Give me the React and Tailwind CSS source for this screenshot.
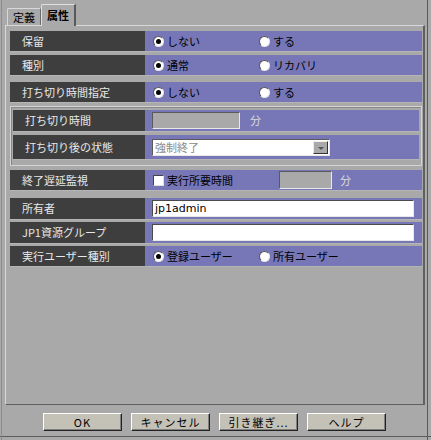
import React from "react";

const F = "font-['Noto_Sans_CJK_JP','Noto_Sans',sans-serif]";

function Radio({ checked }) {
  return (
    <span className="relative inline-flex w-[11px] h-[11px] rounded-full bg-white border border-t-[#555] border-l-[#555] border-b-[#e8e8e8] border-r-[#e8e8e8] items-center justify-center mr-[3px] shrink-0">
      {checked && <span className="w-[5px] h-[5px] rounded-full bg-black" />}
    </span>
  );
}

function Opt({ checked, label, w }) {
  return (
    <div className={`flex items-center ${w}`}>
      <Radio checked={checked} />
      <span className="text-black">{label}</span>
    </div>
  );
}

function Row({ label, h = "h-[21px]", mt, lw = "w-[135px]", children }) {
  return (
    <div className={`flex ${h} ${mt} border-b border-[#b4b4b4]`}>
      <div className={`${lw} bg-[#3e3e3e] text-[#e8e8e8] pl-[12px] flex items-center shrink-0`}>{label}</div>
      <div className="flex-1 bg-[#7777b8] flex items-center pl-[8px]">{children}</div>
    </div>
  );
}

function Btn({ children }) {
  return (
    <div className="w-[79px] h-[18px] bg-[#c4c1b6] border border-t-white border-l-white border-b-[#222] border-r-[#222] flex items-center justify-center text-black text-[11px] tracking-[1px] shadow-[inset_-1px_-1px_0_#808080]">
      {children}
    </div>
  );
}

export default function App() {
  return (
    <div className={`w-[431px] h-[440px] bg-[#a9a9a9] relative overflow-hidden ${F} text-[11px] leading-none`}>
      <div className="absolute right-[3px] top-0 bottom-0 w-[1px] bg-[#5a5a5a]" />
      <div className="absolute left-0 right-0 bottom-[3px] h-[1px] bg-[#5a5a5a]" />
      <div className="absolute left-[1px] top-0 bottom-0 w-[1px] bg-[#8c8c8c]" />
      <div className="pl-[5px] flex flex-col">
        {/* tabs */}
        <div className="h-[25px] flex items-end pl-[2px]">
          <div className="h-[17px] w-[34px] border-t border-l border-[#d8d8d8] border-r border-r-[#6a6a6a] rounded-tl-[2px] flex items-center justify-center text-black">定義</div>
          <div className="h-[22px] w-[35px] border-t border-l border-[#e0e0e0] border-r-2 border-r-[#5a5a5a] rounded-tl-[2px] flex items-center justify-center text-black font-bold relative top-[1px] bg-[#a9a9a9] z-10">属性</div>
        </div>
        {/* panel */}
        <div className="w-[420px] h-[380px] border-t border-l border-[#d8d8d8] border-r-2 border-r-[#606060] border-b border-b-[#606060] pl-[4px] pr-[1px] flex flex-col">
          <Row label="保留" mt="mt-[5px]">
            <Opt checked label="しない" w="w-[106px]" />
            <Opt label="する" />
          </Row>
          <Row label="種別" mt="mt-[3px]">
            <Opt checked label="通常" w="w-[106px]" />
            <Opt label="リカバリ" />
          </Row>
          <Row label="打ち切り時間指定" mt="mt-[6px]">
            <Opt checked label="しない" w="w-[106px]" />
            <Opt label="する" />
          </Row>
          {/* group */}
          <div className="mt-[3px] h-[60px] border border-[#d4d4d4] shadow-[inset_1px_1px_0_#888] pl-[2px] pr-[2px] pt-[3px] flex flex-col">
            <Row label="打ち切り時間" lw="w-[132px]" h="h-[22px]">
              <div className="w-[88px] h-[17px] bg-[#a9a9a9] border border-t-[#5a5a5a] border-l-[#5a5a5a] border-b-[#e8e8e8] border-r-[#e8e8e8] -ml-[1px]" />
              <span className="ml-[10px] text-[#dcdcdc]">分</span>
            </Row>
            <Row label="打ち切り後の状態" lw="w-[132px]" h="h-[25px]" mt="mt-[3px]">
              <div className="w-[178px] h-[17px] bg-white border border-t-[#5a5a5a] border-l-[#5a5a5a] border-b-[#e8e8e8] border-r-[#e8e8e8] -ml-[1px] flex items-center">
                <span className="flex-1 pl-[2px] text-[#8a8a8a] text-[11px]">強制終了</span>
                <span className="w-[15px] h-[13px] mr-[1px] bg-[#a9a9a9] border border-t-[#eee] border-l-[#eee] border-b-[#333] border-r-[#333] flex items-center justify-center">
                  <span className="w-0 h-0 border-l-[3px] border-r-[3px] border-t-[3px] border-l-transparent border-r-transparent border-t-[#555] mt-[2px]" />
                </span>
              </div>
            </Row>
          </div>
          <Row label="終了遅延監視" mt="mt-[4px]">
            <span className="w-[11px] h-[11px] bg-white border border-t-[#444] border-l-[#444] border-b-[#e0e0e0] border-r-[#e0e0e0] mr-[3px] shrink-0" />
            <span className="text-black w-[112px]">実行所要時間</span>
            <div className="w-[53px] h-[18px] bg-[#a9a9a9] border border-t-[#5a5a5a] border-l-[#5a5a5a] border-b-[#e8e8e8] border-r-[#e8e8e8]" />
            <span className="ml-[8px] text-[#dcdcdc]">分</span>
          </Row>
          <Row label="所有者" h="h-[22px]" mt="mt-[7px]">
            <div className="w-[262px] h-[17px] bg-white border border-t-[#4a4a4a] border-l-[#4a4a4a] border-b-[#e8e8e8] border-r-[#e8e8e8] -ml-[1px] flex items-center pl-[2px] text-black text-[11px] font-['DejaVu_Sans',sans-serif]">jp1admin</div>
          </Row>
          <Row label="JP1資源グループ" h="h-[22px]" mt="mt-[2px]">
            <div className="w-[262px] h-[17px] bg-white border border-t-[#4a4a4a] border-l-[#4a4a4a] border-b-[#e8e8e8] border-r-[#e8e8e8] -ml-[1px]" />
          </Row>
          <Row label="実行ユーザー種別" mt="mt-[2px]">
            <Opt checked label="登録ユーザー" w="w-[106px]" />
            <Opt label="所有ユーザー" />
          </Row>
        </div>
        {/* buttons */}
        <div className="mt-[8px] flex gap-[9px] pl-[38px]">
          <Btn>OK</Btn>
          <Btn>キャンセル</Btn>
          <Btn>引き継ぎ...</Btn>
          <Btn>ヘルプ</Btn>
        </div>
      </div>
    </div>
  );
}
